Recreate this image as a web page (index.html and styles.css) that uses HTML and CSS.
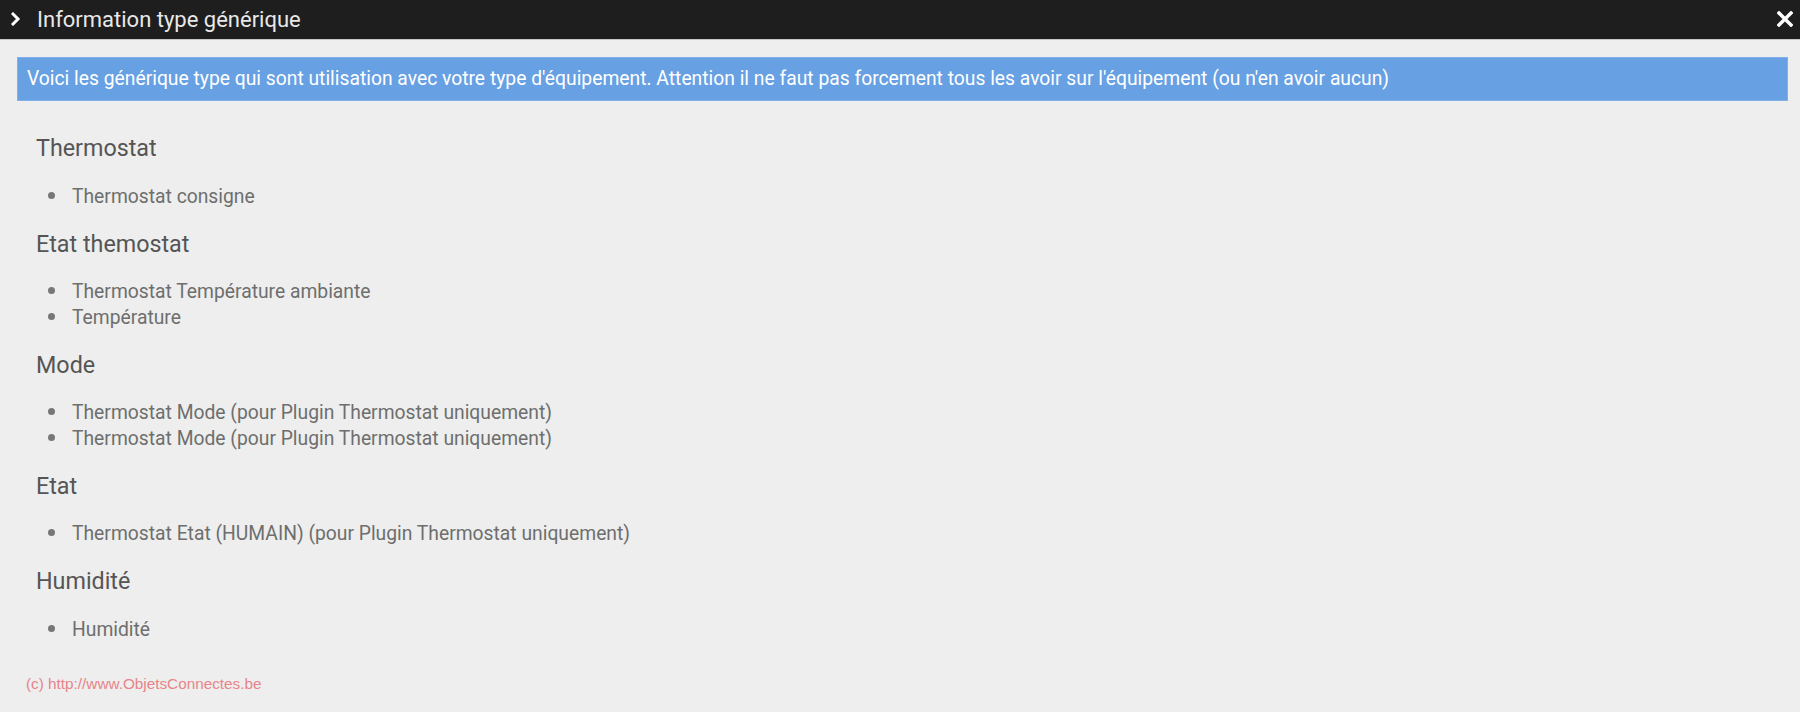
FILE: index.html
```html
<!DOCTYPE html>
<html lang="fr">
<head>
  <meta charset="UTF-8">
  <meta name="viewport" content="width=device-width, initial-scale=1.0">
  <title>Information type générique</title>
  <link rel="stylesheet" href="styles.css">
</head>
<body>
  <div class="modal-header">
    <svg class="chevron" width="10" height="14" viewBox="0 0 10 14">
      <polyline points="2,2 7,7 2,12" fill="none" stroke="#fff" stroke-width="3" stroke-linecap="square"/>
    </svg>
    <span class="modal-title">Information type générique</span>
    <svg class="close" width="16" height="16" viewBox="0 0 16 16">
      <path d="M2 2 L14 14 M14 2 L2 14" stroke="#fff" stroke-width="3.4" stroke-linecap="square"/>
    </svg>
  </div>

  <div class="modal-body">
    <div class="alert-info">Voici les générique type qui sont utilisation avec votre type d'équipement. Attention il ne faut pas forcement tous les avoir sur l'équipement (ou n'en avoir aucun)</div>

    <div class="generic-list">
      <h3>Thermostat</h3>
      <ul>
        <li>Thermostat consigne</li>
      </ul>

      <h3>Etat themostat</h3>
      <ul>
        <li>Thermostat Température ambiante</li>
        <li>Température</li>
      </ul>

      <h3>Mode</h3>
      <ul>
        <li>Thermostat Mode (pour Plugin Thermostat uniquement)</li>
        <li>Thermostat Mode (pour Plugin Thermostat uniquement)</li>
      </ul>

      <h3>Etat</h3>
      <ul>
        <li>Thermostat Etat (HUMAIN) (pour Plugin Thermostat uniquement)</li>
      </ul>

      <h3>Humidité</h3>
      <ul>
        <li>Humidité</li>
      </ul>
    </div>

    <div class="credit">(c) http://www.ObjetsConnectes.be</div>
  </div>
</body>
</html>
```

FILE: styles.css
```css
body {
  margin: 0;
  padding: 0;
  font-family: Roboto, "Liberation Sans", sans-serif;
  background: #edeeed;
  height: 712px;
  overflow: hidden;
}
.modal-header {
  height: 39px;
  line-height: 36px;
  background-color: #1e1e1e;
  border-bottom: 1px solid #c8c8c8;
  display: flex;
  align-items: center;
  padding: 0 7px 0 11px;
}
.chevron {
  flex: none;
  margin-top: -1px;
}
.modal-title {
  flex: 1;
  margin-left: 16px;
  font-size: 22px;
  color: #e8e8e8;
}
.close {
  flex: none;
  margin-top: -1px;
}
.modal-body {
  padding: 17px 12px 0 17px;
}
.alert-info {
  background-color: #67a0e3;
  border: 1px solid #80b0ea;
  color: #fff;
  font-size: 19.3px;
  line-height: 20px;
  padding: 11px 9px;
}
.generic-list {
  padding: 34px 0 0 19px;
}
h3 {
  margin: 0 0 22.5px;
  font-size: 23.3px;
  line-height: 26px;
  font-weight: 400;
  color: #555;
}
ul {
  margin: 0 0 21.5px;
  padding: 0 0 0 36px;
  list-style: none;
}
li {
  position: relative;
  font-size: 19.3px;
  line-height: 25.5px;
  color: #6e6e6e;
}
li::before {
  content: "";
  position: absolute;
  left: -24px;
  top: 8px;
  width: 7px;
  height: 7px;
  border-radius: 50%;
  background: #777;
}
.credit {
  margin-top: 34px;
  padding-left: 9px;
  font-family: "Liberation Sans", Arial, sans-serif;
  font-size: 15.3px;
  line-height: 16px;
  color: #e8848a;
}
```
